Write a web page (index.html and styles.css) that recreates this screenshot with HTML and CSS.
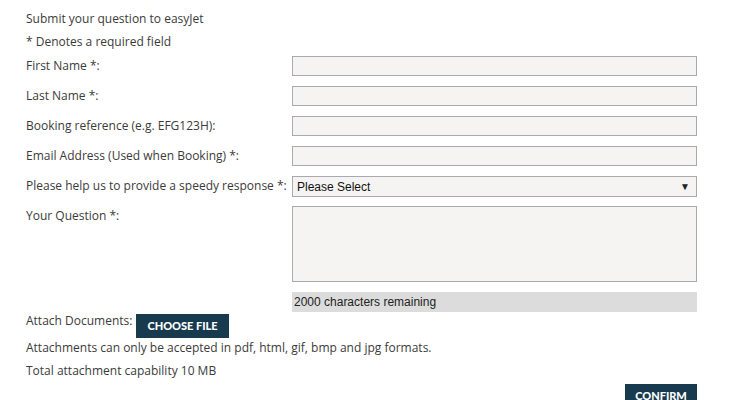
FILE: index.html
```html
<!DOCTYPE html>
<html>
<head>
<meta charset="utf-8">
<link rel="stylesheet" href="styles.css">
</head>
<body>
<div class="page">
  <p class="intro">Submit your question to easyJet</p>
  <p class="intro">* Denotes a required field</p>
  <div class="row"><label class="lbl">First Name *:</label><div class="field"></div></div>
  <div class="row"><label class="lbl">Last Name *:</label><div class="field"></div></div>
  <div class="row"><label class="lbl">Booking reference (e.g. EFG123H):</label><div class="field"></div></div>
  <div class="row"><label class="lbl">Email Address (Used when Booking) *:</label><div class="field"></div></div>
  <div class="row row-select"><label class="lbl">Please help us to provide a speedy response *:</label><div class="field select"><span>Please Select</span><span class="arrow">▼</span></div></div>
  <div class="row"><label class="lbl">Your Question *:</label><div class="field area"></div></div>
  <div class="row"><span></span><div class="counter">2000 characters remaining</div></div>
  <div class="attach"><span class="attach-lbl">Attach Documents:</span><span class="btn">CHOOSE FILE</span></div>
  <p class="note">Attachments can only be accepted in pdf, html, gif, bmp and jpg formats.</p>
  <p class="note">Total attachment capability 10 MB</p>
  <div class="actions"><span class="btn confirm">CONFIRM</span></div>
</div>
</body>
</html>
```
FILE: styles.css
```css
html, body { margin: 0; padding: 0; background: #fff; }
body { font-family: "Open Sans", sans-serif; font-size: 12px; color: #3b3b3b; }
.page { width: 671px; padding: 9px 0 0 26px; }
.intro { margin: 0 0 3px; line-height: 20px; }
.row { display: grid; grid-template-columns: 266px 405px; margin-bottom: 10px; }
.intro + .row { margin-top: 4px; }
.row-select { margin-bottom: 9px; }
.lbl { line-height: 20px; }
.field { box-sizing: border-box; height: 20px; border: 1px solid #a9a9b0; background: #f5f4f2; }
.select { height: 21px; display: flex; justify-content: space-between; align-items: center; padding: 0 6px 0 4px; font-family: "Liberation Sans", Arial, sans-serif; font-size: 12px; color: #111; }
.arrow { font-size: 10px; color: #222; }
.area { height: 76px; }
.counter { height: 20px; background: #dcdcdc; font-family: "Liberation Sans", Arial, sans-serif; font-size: 12px; color: #222; line-height: 20px; padding-left: 2px; }
.attach { display: flex; align-items: flex-start; margin-top: -8px; }
.attach-lbl { line-height: 14px; margin-right: 4px; }
.btn { display: inline-block; background: #173a4f; color: #fff; font-family: "Lato", sans-serif; font-weight: 900; font-size: 11px; height: 24px; line-height: 24px; padding: 0 11px; letter-spacing: 0; }
.note { margin: 0 0 3px; line-height: 20px; }
.actions { display: flex; justify-content: flex-end; }
.confirm { width: 72px; box-sizing: border-box; text-align: center; padding: 0; }
```
